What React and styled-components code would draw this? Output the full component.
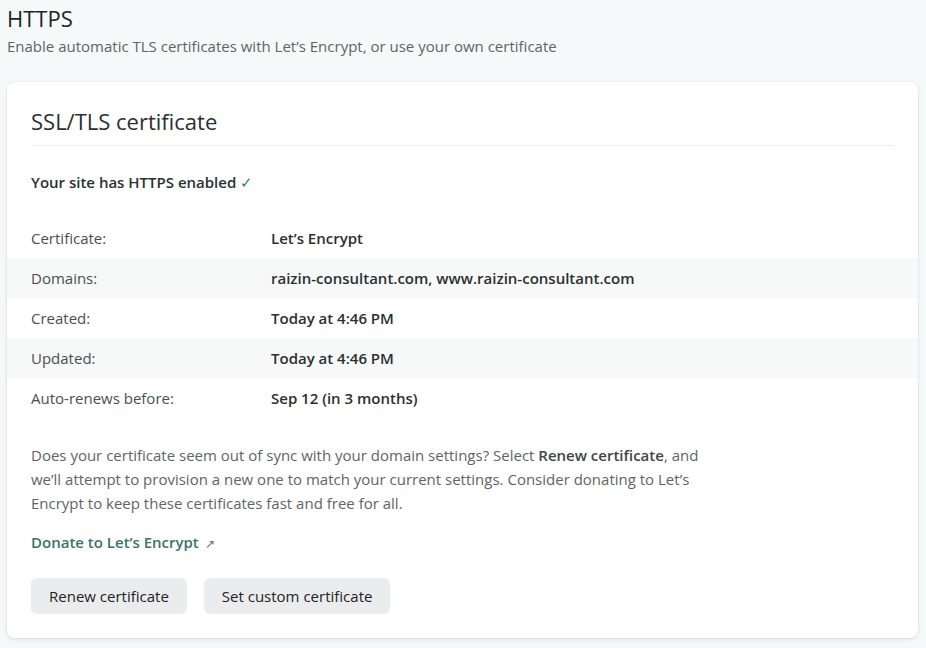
import React from "react";
import styled, { createGlobalStyle } from "styled-components";

const GlobalStyle = createGlobalStyle`
  body {
    margin: 0;
    background: #f6f9f9;
    font-family: "Open Sans", "Noto Sans", sans-serif;
    color: #2b2f31;
  }
`;

const Page = styled.div`
  padding: 2px 7px 10px 7px;
`;

const PageTitle = styled.h1`
  margin: 0;
  font-size: 22px;
  font-weight: 400;
  line-height: 32px;
  color: #1f2325;
`;

const PageSub = styled.p`
  margin: 0 0 24px;
  font-size: 15px;
  line-height: 24px;
  color: #5f6466;
`;

const Card = styled.section`
  background: #fff;
  border-radius: 8px;
  box-shadow: 0 0 0 1px rgba(0, 0, 0, 0.03), 0 2px 4px rgba(0, 0, 0, 0.08);
  padding: 22px 0 24px;
  margin-right: 1px;
`;

const CardHeader = styled.div`
  margin: 0 24px;
  padding-bottom: 7px;
  border-bottom: 1px solid #eeeff0;
`;

const CardTitle = styled.h2`
  margin: 0;
  font-size: 22px;
  font-weight: 500;
  line-height: 34px;
  color: #2b2f31;
`;

const Status = styled.p`
  margin: 24px 24px;
  font-size: 15px;
  font-weight: 600;
  line-height: 24px;
  color: #2b2f31;
  span {
    color: #3b7d6f;
    font-weight: 400;
  }
`;

const Table = styled.div``;

const Row = styled.div`
  display: grid;
  grid-template-columns: 240px 1fr;
  height: 40px;
  align-items: center;
  padding: 0 24px;
  font-size: 15px;
  background: ${(p) => (p.$alt ? "#f7f9f9" : "#fff")};
`;

const Label = styled.div`
  color: #4a4f52;
`;

const Value = styled.div`
  font-weight: 600;
  color: #2b2f31;
`;

const Help = styled.p`
  margin: 25px 24px 0;
  max-width: 680px;
  font-size: 15px;
  line-height: 24px;
  color: #5f6466;
  strong {
    font-weight: 600;
    color: #3f4446;
  }
`;

const Link = styled.a`
  display: inline-block;
  margin: 15px 24px 0;
  font-size: 15px;
  line-height: 24px;
  font-weight: 600;
  color: #3b7368;
  text-decoration: none;
  span {
    color: #6b7072;
    font-weight: 400;
    font-size: 12px;
    margin-left: 6px;
  }
`;

const Actions = styled.div`
  display: flex;
  gap: 17px;
  margin: 22px 24px 0;
`;

const Button = styled.button`
  font-family: inherit;
  font-size: 15px;
  font-weight: 500;
  color: #1f2325;
  background: #ebeced;
  border: none;
  border-radius: 6px;
  height: 36px;
  padding: 0 18px;
`;

const rows = [
  ["Certificate:", "Let’s Encrypt"],
  ["Domains:", "raizin-consultant.com, www.raizin-consultant.com"],
  ["Created:", "Today at 4:46 PM"],
  ["Updated:", "Today at 4:46 PM"],
  ["Auto-renews before:", "Sep 12 (in 3 months)"],
];

export default function App() {
  return (
    <Page>
      <GlobalStyle />
      <PageTitle>HTTPS</PageTitle>
      <PageSub>Enable automatic TLS certificates with Let’s Encrypt, or use your own certificate</PageSub>
      <Card>
        <CardHeader>
          <CardTitle>SSL/TLS certificate</CardTitle>
        </CardHeader>
        <Status>
          Your site has HTTPS enabled <span>✓</span>
        </Status>
        <Table>
          {rows.map(([l, v], i) => (
            <Row key={l} $alt={i % 2 === 1}>
              <Label>{l}</Label>
              <Value>{v}</Value>
            </Row>
          ))}
        </Table>
        <Help>
          Does your certificate seem out of sync with your domain settings? Select{" "}
          <strong>Renew certificate</strong>, and we’ll attempt to provision a new one to match your
          current settings. Consider donating to Let’s Encrypt to keep these certificates fast and
          free for all.
        </Help>
        <Link href="#">
          Donate to Let’s Encrypt<span>↗</span>
        </Link>
        <Actions>
          <Button>Renew certificate</Button>
          <Button>Set custom certificate</Button>
        </Actions>
      </Card>
    </Page>
  );
}
